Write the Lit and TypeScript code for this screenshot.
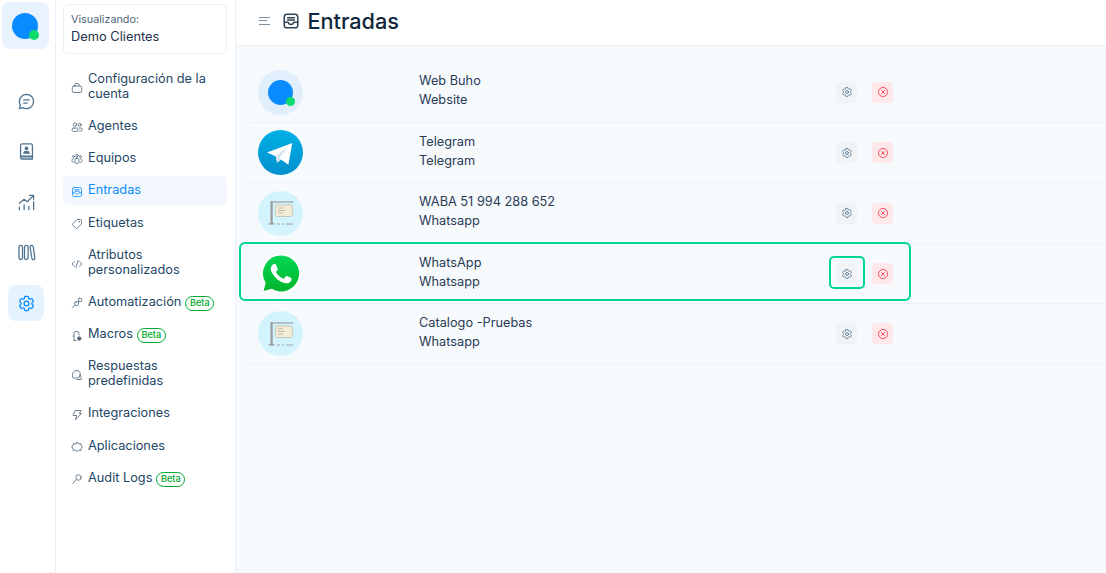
import { LitElement, css, html, svg } from 'lit';
import { customElement } from 'lit/decorators.js';

const icon = (body: unknown, size = 14, sw = 1.6) => html`<svg width=${size} height=${size} viewBox="0 0 24 24" fill="none" stroke="currentColor" stroke-width=${sw} stroke-linecap="round" stroke-linejoin="round">${body}</svg>`;

const gear = svg`<path d="M9.594 3.94c.09-.542.56-.94 1.11-.94h2.593c.55 0 1.02.398 1.11.94l.213 1.281c.063.374.313.686.645.87.074.04.147.083.22.127.325.196.72.257 1.075.124l1.217-.456a1.125 1.125 0 0 1 1.37.49l1.296 2.247a1.125 1.125 0 0 1-.26 1.431l-1.003.827c-.293.241-.438.613-.43.992a7.723 7.723 0 0 1 0 .255c-.008.378.137.75.43.991l1.004.827c.424.35.534.955.26 1.43l-1.298 2.247a1.125 1.125 0 0 1-1.369.491l-1.217-.456c-.355-.133-.75-.072-1.076.124a6.47 6.47 0 0 1-.22.128c-.331.183-.581.495-.644.869l-.213 1.281c-.09.543-.56.94-1.11.94h-2.594c-.55 0-1.019-.398-1.11-.94l-.213-1.281c-.062-.374-.312-.686-.644-.87a6.52 6.52 0 0 1-.22-.127c-.325-.196-.72-.257-1.076-.124l-1.217.456a1.125 1.125 0 0 1-1.369-.49l-1.297-2.247a1.125 1.125 0 0 1 .26-1.431l1.004-.827c.292-.24.437-.613.43-.991a6.932 6.932 0 0 1 0-.255c.007-.38-.138-.751-.43-.992l-1.004-.827a1.125 1.125 0 0 1-.26-1.43l1.297-2.247a1.125 1.125 0 0 1 1.37-.491l1.216.456c.356.133.751.072 1.076-.124.072-.044.146-.086.22-.128.332-.183.582-.495.644-.869l.214-1.28Z"/><circle cx="12" cy="12" r="3"/>`;
const inbox = svg`<rect x="3" y="3" width="18" height="18" rx="3.5"/><path d="M3 13.5h5.2c.4 1.8 1.9 3 3.800 3s3.400-1.200 3.800-3H21M7.500 7.500h9M7.500 10.500h9"/>`;

const nav: { label: string; icon: unknown; active?: boolean; beta?: boolean }[] = [
  { label: 'Configuración de la cuenta', icon: svg`<rect x="2.500" y="8" width="19" height="13" rx="3.500"/><path d="M8 8V5a2 2 0 0 1 2-2h4a2 2 0 0 1 2 2v3"/>` },
  { label: 'Agentes', icon: svg`<circle cx="8" cy="7" r="3.500"/><circle cx="17.500" cy="7.500" r="3"/><rect x="2" y="14" width="12" height="7" rx="3.500"/><path d="M16 14h3.500a2.500 2.500 0 0 1 0 6H17"/>` },
  { label: 'Equipos', icon: svg`<circle cx="12" cy="5" r="2.500"/><circle cx="5" cy="7" r="2"/><circle cx="19" cy="7" r="2"/><rect x="8" y="10" width="8" height="11" rx="3.500"/><path d="M5 11.500c-2 0-3 1-3 3V16c0 1.500 1.500 3 3.500 3M19 11.500c2 0 3 1 3 3V16c0 1.500-1.500 3-3.500 3"/>` },
  { label: 'Entradas', icon: inbox, active: true },
  { label: 'Etiquetas', icon: svg`<path d="M13 3h6a2 2 0 0 1 2 2v6a2 2 0 0 1-.6 1.400l-8 8a2 2 0 0 1-2.800 0l-6-6a2 2 0 0 1 0-2.800l8-8A2 2 0 0 1 13 3z"/><circle cx="16.500" cy="7.500" r=".6"/>` },
  { label: 'Atributos personalizados', icon: svg`<path d="M7 7l-5 5 5 5M17 7l5 5-5 5M14 5l-4 14"/>` },
  { label: 'Automatización', beta: true, icon: svg`<rect x="15" y="2.500" width="6.500" height="6.500" rx="2"/><rect x="7.500" y="9.500" width="7.500" height="7.500" rx="2.500"/><path d="M14.500 10l1.500-2M8 16.500L2.500 22"/>` },
  { label: 'Macros', beta: true, icon: svg`<path d="M6 21V7a4 4 0 0 1 4-4h2a4 4 0 0 1 4 4v3M6 21h4M6 12H4"/><circle cx="16.500" cy="17" r="3.500" fill="currentColor"/>` },
  { label: 'Respuestas predefinidas', icon: svg`<path d="M11 3a8 8 0 0 0-8 8v5.500c0 .8.700 1.500 1.500 1.500H11a7.500 7.500 0 0 0 0-15z"/><path d="M18 11l3 8.500c.2.700-.3 1.500-1 1.500h-9"/>` },
  { label: 'Integraciones', icon: svg`<path d="M9 3h11l-3.500 6H21L9 21.500 11.500 13H5z"/>` },
  { label: 'Aplicaciones', icon: svg`<path d="M12 2.500l3 3.500 4.500-1 .5 4.500 3 2.500-3 2.500-.5 4.500-4.500-1-3 3.500-3-3.500-4.500 1-.5-4.500-3-2.500 3-2.500.5-4.500 4.500 1z"/>` },
  { label: 'Audit Logs', beta: true, icon: svg`<circle cx="15" cy="9" r="5.500"/><path d="M11 13l-8 8"/>` },
];

const rail = [
  svg`<path d="M12 3a9 9 0 0 0-9 9c0 1.700.5 3.300 1.300 4.700L3 21l4.300-1.300A9 9 0 1 0 12 3z"/><path d="M8.500 10h7M8.500 14h4.500"/>`,
  svg`<path d="M6.500 2.500h11a2 2 0 0 1 2 2V18h-15V4.500a2 2 0 0 1 2-2z"/><path d="M4.500 18v1.500a2 2 0 0 0 2 2h13V18" fill="currentColor" fill-opacity=".45"/><circle cx="12" cy="8" r="1.600" fill="currentColor"/><path d="M8.500 14c.5-1.500 1.800-2 3.500-2s3 .5 3.500 2z" fill="currentColor"/>`,
  svg`<path d="M3 21v-3M9 21v-6M15 21v-4M21 21V11M3 13l6-5 4 3 8-8M16 3h5v5"/>`,
  svg`<rect x="2.500" y="3" width="4.500" height="18" rx="2.250"/><rect x="9.500" y="3" width="4.500" height="18" rx="2.250"/><path d="M16.500 5c0-2.500 3.500-2.500 4 0l2 14c.3 2.500-3.200 3-3.700.5z"/>`,
];

const buhoLogo = (size: number, dot: number) => html`
  <span class="buho" style="width:${size}px;height:${size}px">
    <span class="buho-dot" style="width:${dot}px;height:${dot}px"></span>
  </span>`;

const signIcon = html`<svg width="26" height="26" viewBox="0 0 26 26" fill="none">
  <rect x="2.500" y="1" width="2.200" height="23" fill="#9a9a9a"/>
  <rect x="0.500" y="23.300" width="6" height="1.200" fill="#9a9a9a"/>
  <path d="M4.700 2h20.600" stroke="#8f8f8f" stroke-width="1"/>
  <path d="M8 5h15.500l.8 1v9.500l-1 1H8.500l-1-1V6z" fill="#f4ecd6" stroke="#b9b9a8" stroke-width=".7"/>
  <path d="M10 8h5M10 10.500h7M10 13h5" stroke="#a8b0a0" stroke-width=".8"/>
  <path d="M9 24h3M14 24h2M18 24h7" stroke="#8f8f8f" stroke-width=".8"/>
</svg>`;

const telegramLogo = html`<svg width="45" height="45" viewBox="0 0 45 45">
  <defs><linearGradient id="tg" x1="0" y1="0" x2="0" y2="1"><stop offset="0" stop-color="#00b0e4"/><stop offset="1" stop-color="#0090cf"/></linearGradient></defs>
  <circle cx="22.500" cy="22.500" r="22.500" fill="url(#tg)"/>
  <path d="M9 22.500L34.300 13l-3.900 21.800-7.500-5.400-3.700 3.300-1.500-6.500z" fill="#fff"/>
  <path d="M17.700 26.200l12-9.700-8 10.700 1.200 2.200-3.700 3.300z" fill="#d3e4ef"/>
</svg>`;

const whatsappLogo = html`<svg width="42" height="43" viewBox="0 0 42 42">
  <defs><linearGradient id="wa" x1="0" y1="0" x2="0" y2="1"><stop offset="0" stop-color="#06d755"/><stop offset="1" stop-color="#01b62c"/></linearGradient></defs>
  <path d="M21 1a20 20 0 0 0-17 30.400L1 41l10-2.800A20 20 0 1 0 21 1z" fill="#fff"/>
  <path d="M21 3a18 18 0 0 0-15.300 27.500L3.500 38.500l8.200-2.200A18 18 0 1 0 21 3z" fill="url(#wa)"/>
  <path d="M17.472 14.382c-.297-.149-1.758-.867-2.03-.967-.273-.099-.471-.148-.67.15-.197.297-.767.966-.94 1.164-.173.199-.347.223-.644.075-.297-.15-1.255-.463-2.39-1.475-.883-.788-1.48-1.761-1.653-2.059-.173-.297-.018-.458.13-.606.134-.133.298-.347.446-.52.149-.174.198-.298.298-.497.099-.198.05-.371-.025-.52-.075-.149-.669-1.612-.916-2.207-.242-.579-.487-.5-.669-.51-.173-.008-.371-.01-.57-.01-.198 0-.52.074-.792.372-.272.297-1.04 1.016-1.04 2.479 0 1.462 1.065 2.875 1.213 3.074.149.198 2.096 3.2 5.077 4.487.709.306 1.262.489 1.694.625.712.227 1.36.195 1.871.118.571-.085 1.758-.719 2.006-1.413.248-.694.248-1.289.173-1.413-.074-.124-.272-.198-.57-.347z" transform="translate(0.500 0.500) scale(1.72)" fill="#fff"/>
</svg>`;

const inboxes = [
  { name: 'Web Buho', kind: 'Website', logo: 'buho' },
  { name: 'Telegram', kind: 'Telegram', logo: 'telegram' },
  { name: 'WABA 51 994 288 652', kind: 'Whatsapp', logo: 'sign' },
  { name: 'WhatsApp', kind: 'Whatsapp', logo: 'whatsapp', highlight: true },
  { name: 'Catalogo -Pruebas', kind: 'Whatsapp', logo: 'sign' },
];

@customElement('app-root')
export class AppRoot extends LitElement {
  static styles = css`
    :host {
      display: flex;
      width: 1106px;
      height: 573px;
      overflow: hidden;
      font-family: Inter, "Liberation Sans", sans-serif;
      color: #1f3b57;
      background: #fff;
    }
    .rail {
      width: 55px;
      flex: none;
      border-right: 1px solid #edf1f5;
      display: flex;
      flex-direction: column;
      align-items: center;
      padding-top: 2px;
    }
    .brand {
      width: 47px;
      height: 47px;
      box-sizing: border-box;
      padding-right: 2px;
      border-radius: 8px;
      background: #e8f3ff;
      display: flex;
      align-items: center;
      justify-content: center;
      margin: 0 4px 34px 2px;
      align-self: flex-start;
    }
    .buho {
      position: relative;
      display: block;
      border-radius: 50%;
      background: #0a8bff;
    }
    .buho-dot {
      position: absolute;
      right: -1.500px;
      bottom: -1.500px;
      border-radius: 50%;
      background: #0bdc6b;
    }
    .rail-btn {
      width: 36px;
      height: 36px;
      border-radius: 8px;
      display: flex;
      align-items: center;
      justify-content: center;
      color: #4d7390;
      margin-bottom: 14.600px;
      margin-right: 3px;
    }
    .rail-btn.active {
      background: #e5f3ff;
      color: #0a8bff;
    }
    .panel {
      width: 164px;
      flex: none;
      border-right: 1px solid #edf1f5;
      padding: 4px 8px 0 7px;
    }
    .account {
      height: 50px;
      box-sizing: border-box;
      border: 1px solid #e9eff5;
      border-radius: 5px;
      padding: 8px 7px;
      margin-bottom: 10.700px;
    }
    .account small {
      display: block;
      font-size: 10.800px;
      line-height: 14px;
      color: #4f6478;
    }
    .account b {
      display: block;
      font-weight: 400;
      font-size: 12.850px;
      line-height: 18px;
      margin-top: 1px;
      color: #23324a;
    }
    .item {
      display: flex;
      align-items: center;
      padding: 7.150px 8px;
      margin-bottom: 3.300px;
      border-radius: 5px;
      font-size: 12.750px;
      line-height: 14.700px;
      color: #1f4766;
    }
    .item svg {
      flex: none;
      margin: 2px 5px 0 0;
      width: 12px;
      height: 12px;
      color: #4d6478;
    }
    .item.active {
      background: #f2f8fe;
      color: #0a8bff;
    }
    .item.active svg {
      color: #0a8bff;
    }
    .beta {
      display: inline-block;
      border: 1px solid #00a82d;
      border-radius: 8px;
      color: #00a82d;
      font-size: 9.200px;
      font-weight: 500;
      line-height: 11px;
      padding: 0 3.500px 2px;
      margin: -2px 0 -2px 4px;
      vertical-align: 0;
    }
    .main {
      flex: 1;
      min-width: 0;
      background: #f6fafd;
    }
    .bar {
      height: 46px;
      box-sizing: border-box;
      background: #fff;
      border-bottom: 1px solid #eef2f6;
      display: flex;
      align-items: center;
      padding: 0 0 4px 23px;
      gap: 11px;
    }
    .burger {
      display: flex;
      flex-direction: column;
      gap: 2.500px;
      width: 11px;
      margin-right: 1px;
    }
    .burger i {
      display: block;
      height: 1px;
      background: #7b8f9f;
    }
    .burger i:nth-child(2) { width: 8px; }
    .bar svg { color: #2f4557; }
    .bar h1 {
      margin: 0 0 0 -3.500px;
      font-size: 21.700px;
      font-weight: 500;
      line-height: 24px;
      color: #10263a;
    }
    .table {
      margin: 16.700px 0 0 14px;
    }
    .row {
      position: relative;
      height: 60.400px;
      box-sizing: border-box;
      display: flex;
      align-items: center;
      border-bottom: 1px solid #edf1f6;
      padding-left: 8px;
    }
    .logo {
      width: 45px;
      height: 45px;
      flex: none;
      border-radius: 50%;
      display: flex;
      align-items: center;
      justify-content: center;
    }
    .logo.buho-bg { background: #e1eefc; }
    .logo.sign-bg { background: #d3f4ff; }
    .text {
      margin-left: 116px;
      width: 417px;
      padding-bottom: 4px;
      font-size: 12.750px;
      line-height: 19px;
      color: #2a3b55;
    }
    .actions {
      display: flex;
      gap: 15px;
    }
    .act {
      position: relative;
      width: 21px;
      height: 21px;
      border-radius: 4px;
      background: #f0f4f7;
      color: #5f7c93;
      display: flex;
      align-items: center;
      justify-content: center;
    }
    .act.del {
      background: #ffe8ea;
      color: #f5414f;
    }
    .ring {
      position: absolute;
      border: 2px solid #00d68f;
      pointer-events: none;
    }
    .ring.rowring {
      left: -11px;
      top: -2px;
      width: 668px;
      height: 55px;
      border-radius: 6px;
    }
    .ring.btnring {
      left: -7px;
      top: -7px;
      width: 32px;
      height: 29px;
      border-radius: 5px;
    }
  `;

  private logo(kind: string) {
    if (kind === 'buho') return html`<span class="logo buho-bg">${buhoLogo(25, 9)}</span>`;
    if (kind === 'telegram') return html`<span class="logo">${telegramLogo}</span>`;
    if (kind === 'whatsapp') return html`<span class="logo">${whatsappLogo}</span>`;
    return html`<span class="logo sign-bg">${signIcon}</span>`;
  }

  render() {
    return html`
      <nav class="rail">
        <div class="brand">${buhoLogo(26, 10)}</div>
        ${rail.map((r) => html`<div class="rail-btn">${icon(r, 19)}</div>`)}
        <div class="rail-btn active">${icon(gear, 19)}</div>
      </nav>
      <aside class="panel">
        <div class="account">
          <small>Visualizando:</small>
          <b>Demo Clientes</b>
        </div>
        ${nav.map((n) => html`
          <div class="item ${n.active ? 'active' : ''}">
            ${icon(n.icon)}
            <span>${n.label}${n.beta ? html`<span class="beta">Beta</span>` : ''}</span>
          </div>`)}
      </aside>
      <main class="main">
        <header class="bar">
          <div class="burger"><i></i><i></i><i></i></div>
          ${icon(inbox, 18, 2)}
          <h1>Entradas</h1>
        </header>
        <section class="table">
          ${inboxes.map((r) => html`
            <div class="row">
              ${this.logo(r.logo)}
              <div class="text">${r.name}<br />${r.kind}</div>
              <div class="actions">
                <div class="act">
                  ${icon(gear, 12, 1.8)}
                  ${r.highlight ? html`<div class="ring btnring"></div>` : ''}
                </div>
                <div class="act del">${icon(svg`<rect x="3" y="3" width="18" height="18" rx="8.500"/><path d="M9 9l6 6M15 9l-6 6"/>`, 12, 1.8)}</div>
              </div>
              ${r.highlight ? html`<div class="ring rowring"></div>` : ''}
            </div>`)}
        </section>
      </main>
    `;
  }
}
